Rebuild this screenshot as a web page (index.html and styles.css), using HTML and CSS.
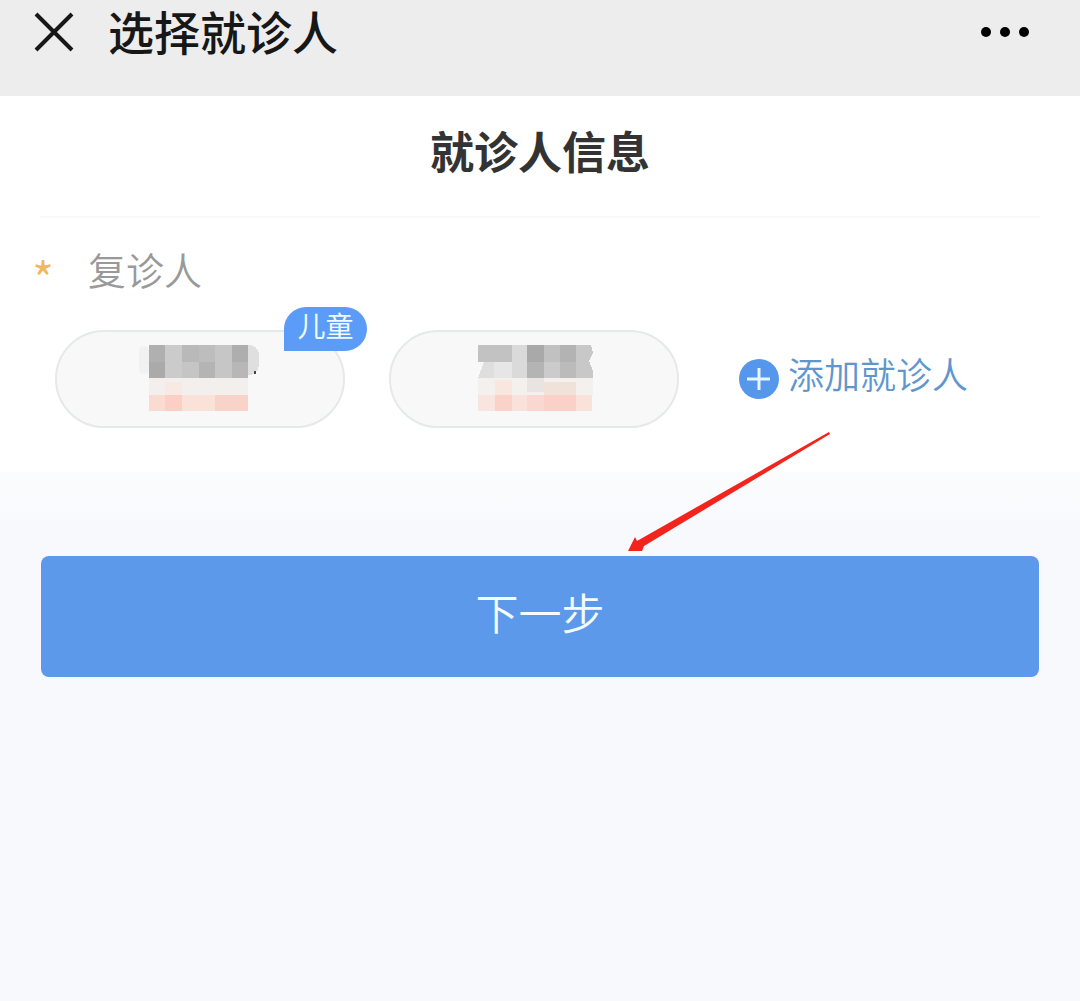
FILE: index.html
```html
<!DOCTYPE html>
<html lang="zh-CN">
<head>
<meta charset="utf-8">
<meta name="viewport" content="width=device-width, initial-scale=1">
<title>选择就诊人</title>
<link rel="stylesheet" href="styles.css">
</head>
<body>
<header class="topbar">
  <button class="icon-button" type="button" aria-label="关闭">
    <svg width="40" height="40" viewBox="0 0 40 40" fill="none" stroke="#171717" stroke-width="4"><path d="M2 2 38 38M38 2 2 38"/></svg>
  </button>
  <h1 class="topbar-title">选择就诊人</h1>
  <button class="icon-button" type="button" aria-label="更多">
    <svg width="50" height="12" viewBox="0 0 50 12" fill="#000"><circle cx="6" cy="6" r="5"/><circle cx="25" cy="6" r="5"/><circle cx="44" cy="6" r="5"/></svg>
  </button>
</header>
<main class="page">
  <section class="card">
    <h2 class="card-title">就诊人信息</h2>
    <div class="field-label"><span class="required">*</span><span>复诊人</span></div>
    <div class="patients">
      <button class="patient" type="button" aria-label="就诊人一">
        <svg width="122" height="72" viewBox="0 0 122 72" shape-rendering="crispEdges">
          <rect x="0" y="3" width="10" height="28" rx="5" fill="#f1f1f1"/>
          <rect x="94" y="2" width="26" height="30" rx="10" fill="#dfdfdf"/>
          <path fill="#b0b0b0" d="M10 2h16v17H10z"/><path fill="#aaa" d="M10 19h16v16H10z"/>
          <path fill="#cbcbcb" d="M26 2h17v33H26z"/><path fill="#b9b9b9" d="M43 2h17v17H43z"/>
          <path fill="#bdbdbd" d="M60 2h16v17H60z"/><path fill="#c5c5c5" d="M43 19h17v16H43z"/>
          <path fill="#b4b4b4" d="M60 19h16v16H60z"/><path fill="#c6c6c6" d="M76 2h17v33H76z"/>
          <path fill="#aeaeae" d="M93 2h16v17H93z"/><path fill="#b7b7b7" d="M93 19h16v16H93z"/>
          <path fill="#f2efed" d="M10 35h99v17H10z"/><path fill="#f8e9e4" d="M26 39h17v13H26z"/>
          <path fill="#f9dbd2" d="M10 52h16v16H10z"/><path fill="#fbcfc5" d="M26 52h17v16H26z"/>
          <path fill="#fbe2d9" d="M43 52h33v16H43z"/><path fill="#f9d3c9" d="M76 52h33v16H76z"/>
          <path fill="#444" d="M115 28h2v3h-2z"/>
        </svg>
        <span class="tag">儿童</span>
      </button>
      <button class="patient" type="button" aria-label="就诊人二">
        <svg width="118" height="72" viewBox="0 0 118 72" shape-rendering="crispEdges">
          <path fill="#c2c2c2" d="M3 2h34v17H3z"/><path fill="#dadada" d="M37 2h15v17H37z"/>
          <path fill="#dedede" d="M9 19h10v16H3l3-8z"/><path fill="#e6e6e6" d="M19 19h18v16H19z"/>
          <path fill="#dadada" d="M37 19h15v16H37z"/><path fill="#a9a9a9" d="M52 2h17v17H52z"/>
          <path fill="#b4b4b4" d="M52 19h17v16H52z"/><path fill="#c1c1c1" d="M69 2h16v17H69z"/>
          <path fill="#cbcbcb" d="M69 19h16v16H69z"/><path fill="#b3b3b3" d="M85 2h16v17H85z"/>
          <path fill="#bbb" d="M85 19h16v16h-16z"/><path fill="#c8c8c8" d="M101 2h15l2 8-4 8 4 10v7h-17z"/>
          <path fill="#f4f0ee" d="M3 35h115v17H3z"/><path fill="#f8e6df" d="M20 37h17v15H20z"/>
          <path fill="#e9e4e1" d="M52 35h17v14H52z"/><path fill="#f0e2d9" d="M69 39h32v13H69z"/>
          <path fill="#f9e5df" d="M3 52h17v16H3z"/><path fill="#fbd2c9" d="M20 52h17v16H20z"/>
          <path fill="#f9e2dc" d="M37 52h15v16H37z"/><path fill="#fad8d1" d="M52 52h17v16H52z"/>
          <path fill="#fbd0c8" d="M69 52h32v16H69z"/><path fill="#f8e2d9" d="M101 52h16v16h-16z"/>
        </svg>
      </button>
      <button class="add" type="button">
        <svg width="40" height="40" viewBox="0 0 40 40"><circle cx="20" cy="20" r="20" fill="#5697ec"/><path d="M8 20h23M20 9v22" stroke="#e8f6ff" stroke-width="3"/></svg>
        <span class="add-text">添加就诊人</span>
      </button>
    </div>
  </section>
  <div class="actions">
    <button class="next" type="button">下一步</button>
    <svg class="pointer" width="204" height="120" viewBox="0 0 204 120" aria-hidden="true"><path fill="#f2241b" d="M202 0 203 2 17 114 15 119 1 119 8 105 10 109Z"/></svg>
  </div>
</main>
</body>
</html>
```
FILE: styles.css
```css
* {
  box-sizing: border-box;
}

body {
  margin: 0;
  min-height: 100vh;
  background: #f8f9fd;
  font-family: "Noto Sans CJK SC", sans-serif;
}

button {
  padding: 0;
  border: 0;
  background: none;
  font: inherit;
  cursor: pointer;
}

svg {
  display: block;
  flex: none;
}

.topbar {
  display: flex;
  align-items: center;
  gap: 34px;
  padding: 0 50px 32px 34px;
  background: #ededed;
}

.topbar-title {
  flex: 1;
  margin: 0;
  padding-top: 4px;
  color: #171717;
  font-family: "Liberation Sans", "Noto Sans CJK SC", sans-serif;
  font-size: 46px;
  font-weight: 500;
  line-height: 60px;
}

.card {
  padding-bottom: 44px;
  background: #fff;
}

.card-title {
  margin: 0 40px;
  padding: 24px 0 36px;
  border-bottom: 2px solid #f9f9f9;
  color: #333;
  font-size: 44px;
  font-weight: 700;
  line-height: 60px;
  text-align: center;
}

.field-label {
  display: flex;
  gap: 34px;
  padding: 25px 32px 15px;
  color: #999;
  font-size: 38px;
  font-weight: 350;
  line-height: 52px;
}

.required {
  color: #f0b860;
  font-size: 48px;
  line-height: 68px;
}

.patients {
  display: grid;
  grid-template-columns: minmax(0, 290px) minmax(0, 290px) auto;
  justify-content: start;
  gap: 44px;
  padding: 4px 55px 0;
}

.patient {
  position: relative;
  display: flex;
  align-items: center;
  justify-content: center;
  height: 98px;
  border: 2px solid #e6e9e9;
  border-radius: 49px;
  background: #f8f8f8;
}

.tag {
  position: absolute;
  top: -25px;
  right: -24px;
  width: 83px;
  height: 44px;
  border-radius: 22px 22px 22px 0;
  background: #5a9cf8;
  color: #f0fbff;
  font-size: 28px;
  line-height: 36px;
}

.add {
  display: flex;
  align-items: center;
  gap: 9px;
  padding-left: 16px;
  color: #5f96cf;
  font-size: 36px;
  font-weight: 350;
  line-height: 52px;
  white-space: nowrap;
}

.add-text {
  padding-bottom: 12px;
}

.actions {
  position: relative;
  padding: 84px 41px;
  background: linear-gradient(#fbfcfd, #f8f9fd 60px);
}

.next {
  display: block;
  width: 100%;
  padding: 25px 0 36px;
  border-radius: 8px;
  background: #5c99ea;
  color: #f4fcff;
  font-size: 43px;
  font-weight: 350;
  line-height: 60px;
}

.pointer {
  position: absolute;
  top: -40px;
  left: calc(50% + 87px);
}
```
